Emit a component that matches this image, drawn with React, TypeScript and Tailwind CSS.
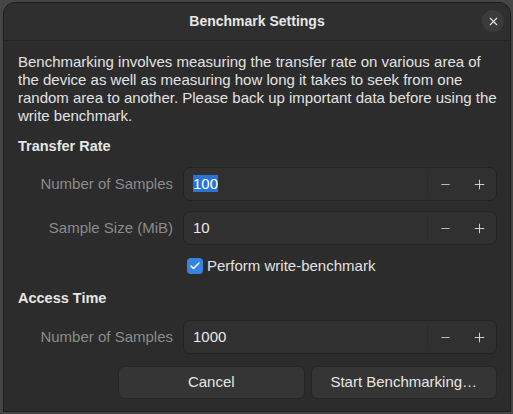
import { Check, Minus, Plus, X } from 'lucide-react'

function SpinRow({ label, value, selected }: { label: string; value: string; selected?: boolean }) {
  return (
    <div className="flex items-center">
      <div className="w-[165px] pr-[10px] text-right text-[15px] leading-[18px] text-[#8b8b8b]">{label}</div>
      <div className="flex h-[34px] flex-1 items-center rounded-[7px] border border-[#242424] bg-[#303030]">
        <div className="flex-1 pl-[9px] text-[15px] text-[#e8e8e8]">
          {selected ? <span className="bg-[#2a74d5] text-white">{value}</span> : value}
        </div>
        <div className="h-[26px] w-px bg-[#2b2b2b]" />
        <button type="button" className="flex h-full w-[34px] items-center justify-center text-[#d8d8d8]">
          <Minus size={13} strokeWidth={1.5} />
        </button>
        <button type="button" className="flex h-full w-[34px] items-center justify-center text-[#d8d8d8]">
          <Plus size={15} strokeWidth={1.5} />
        </button>
      </div>
    </div>
  )
}

export default function App() {
  return (
    <div
      className="h-[414px] w-[513px] bg-[#454545] pl-[3px] pt-[2px]"
      style={{ fontFamily: '"Liberation Sans", Arial, sans-serif' }}
    >
      <div className="flex h-[410px] w-[508px] flex-col overflow-hidden rounded-t-[12px] border border-[#1c1c1c] bg-[#2c2c2c]">
        {/* header bar */}
        <div className="relative flex h-[38px] shrink-0 items-center justify-center border-b border-[#242424] bg-[#2f2f2f]">
          <span className="text-[14px] font-bold text-[#e6e6e6]">Benchmark Settings</span>
          <button
            type="button"
            className="absolute right-[6px] top-[7px] flex size-[22px] items-center justify-center rounded-full bg-[#3b3b3b] text-[#e8e8e8]"
          >
            <X size={13} strokeWidth={2} />
          </button>
        </div>

        <div className="flex flex-1 flex-col pl-[14px] pr-[13px] pt-[12px]">
          <p className="text-[15px] leading-[18px] text-[#e2e2e2]">
            Benchmarking involves measuring the transfer rate on various area of
            <br />
            the device as well as measuring how long it takes to seek from one
            <br />
            random area to another. Please back up important data before using the
            <br />
            write benchmark.
          </p>

          <h2 className="mt-[12px] text-[14.5px] font-bold leading-[18px] text-[#e6e6e6]">Transfer Rate</h2>

          <div className="mt-[12px] flex flex-col gap-[10px]">
            <SpinRow label="Number of Samples" value="100" selected />
            <SpinRow label="Sample Size (MiB)" value="10" />
          </div>

          <label className="mt-[12px] flex h-[18px] items-center gap-[4px] pl-[169px] text-[15px] text-[#e2e2e2]">
            <span className="flex size-[16px] items-center justify-center rounded-[4px] bg-[#3584e4] text-white">
              <Check size={12} strokeWidth={3} />
            </span>
            Perform write-benchmark
          </label>

          <h2 className="mt-[14px] text-[14.5px] font-bold leading-[18px] text-[#e6e6e6]">Access Time</h2>

          <div className="mt-[13px]">
            <SpinRow label="Number of Samples" value="1000" />
          </div>

          <div className="mt-[12px] flex gap-[6px] pl-[100px]">
            <button
              type="button"
              className="h-[33px] flex-1 rounded-[7px] border border-[#262626] bg-[#353535] text-[15px] text-[#e6e6e6]"
            >
              Cancel
            </button>
            <button
              type="button"
              className="h-[33px] flex-1 rounded-[7px] border border-[#262626] bg-[#353535] text-[15px] text-[#e6e6e6]"
            >
              Start Benchmarking…
            </button>
          </div>
        </div>
      </div>
    </div>
  )
}
